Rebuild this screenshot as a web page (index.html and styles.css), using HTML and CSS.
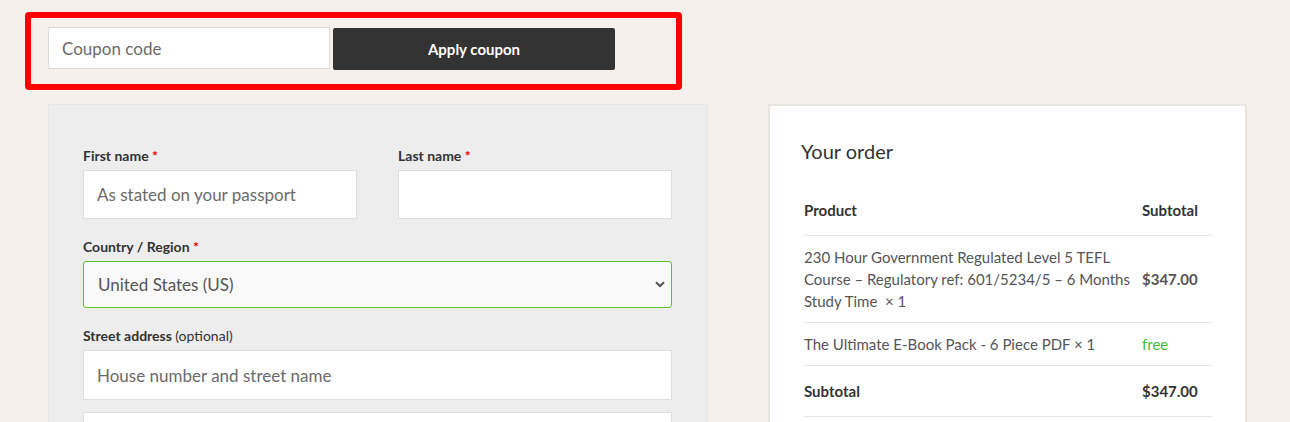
FILE: index.html
```html
<!DOCTYPE html>
<html lang="en">
<head>
<meta charset="utf-8">
<title>Checkout</title>
<link rel="stylesheet" href="styles.css">
</head>
<body>
<div class="page">
  <div class="coupon-box">
    <input class="coupon-input" type="text" placeholder="Coupon code">
    <button class="coupon-btn" type="button">Apply coupon</button>
  </div>
  <div class="columns">
    <form class="billing">
      <div class="row-2">
        <div class="field">
          <label class="lbl">First name <span class="req">*</span></label>
          <input class="txt" type="text" placeholder="As stated on your passport">
        </div>
        <div class="field">
          <label class="lbl">Last name <span class="req">*</span></label>
          <input class="txt" type="text">
        </div>
      </div>
      <div class="field">
        <label class="lbl">Country / Region <span class="req">*</span></label>
        <div class="select">
          <span>United States (US)</span>
          <svg class="chev" width="10" height="7" viewBox="0 0 10 7"><path d="M1 1.2 L5 5 L9 1.2" fill="none" stroke="#555" stroke-width="2"/></svg>
        </div>
      </div>
      <div class="field">
        <label class="lbl">Street address <span class="opt">(optional)</span></label>
        <input class="txt tall" type="text" placeholder="House number and street name">
        <input class="txt tall" type="text">
      </div>
    </form>
    <div class="order">
      <h3 class="order-title">Your order</h3>
      <table class="order-table">
        <thead>
          <tr><th>Product</th><th class="col-sub">Subtotal</th></tr>
        </thead>
        <tbody>
          <tr class="item">
            <td class="prod">230 Hour Government Regulated Level 5 TEFL Course – Regulatory ref: 601/5234/5 – 6 Months Study Time &nbsp;× 1</td>
            <td class="price">$347.00</td>
          </tr>
          <tr class="item">
            <td class="prod">The Ultimate E-Book Pack - 6 Piece PDF × 1</td>
            <td class="free">free</td>
          </tr>
        </tbody>
        <tfoot>
          <tr><th>Subtotal</th><td class="total">$347.00</td></tr>
        </tfoot>
      </table>
    </div>
  </div>
</div>
</body>
</html>
```

FILE: styles.css
```css
* { box-sizing: border-box; }
html, body { margin: 0; padding: 0; }
body {
  background: #f5f0eb;
  font-family: Lato, "Open Sans", sans-serif;
  color: #333;
  width: 1290px;
  height: 422px;
  overflow: hidden;
}
.page {
  padding: 12px 0 0 25px;
}
.coupon-box {
  width: 657px;
  height: 78px;
  border: 6px solid #ff0000;
  border-radius: 4px;
  display: flex;
  align-items: flex-start;
  padding: 9px 0 0 17px;
  gap: 3px;
}
.coupon-input {
  width: 282px;
  height: 42px;
  border: 1px solid #dcdcdc;
  background: #fff;
  padding: 0 13px;
  font-family: inherit;
  font-size: 17px;
  color: #666;
  outline: none;
}
.coupon-input::placeholder { color: #6b6b6b; }
.coupon-btn {
  margin-top: 1px;
  width: 282px;
  height: 42px;
  border: none;
  border-radius: 2px;
  background: #333;
  color: #fff;
  font-family: inherit;
  font-weight: 700;
  font-size: 15px;
}
.columns {
  display: flex;
  align-items: flex-start;
  gap: 60px;
  margin-top: 14px;
  padding-left: 23px;
}
.billing {
  width: 660px;
  height: 330px;
  background: #ededed;
  border: 1px solid #e6e6e6;
  padding: 41px 35px 0 34px;
  display: flex;
  flex-direction: column;
  gap: 18px;
}
.row-2 {
  display: flex;
  gap: 41px;
}
.row-2 .field { width: 274px; }
.field {
  display: flex;
  flex-direction: column;
}
.lbl {
  font-size: 14px;
  font-weight: 700;
  color: #333;
  line-height: 20px;
  margin-bottom: 4px;
}
.req { color: #e00; font-weight: 700; }
.opt { font-weight: 400; }
.txt {
  width: 100%;
  height: 49px;
  border: 1px solid #dedede;
  background: #fff;
  padding: 0 13px;
  font-family: inherit;
  font-size: 17px;
  color: #666;
  outline: none;
}
.txt.tall { height: 50px; }
.txt::placeholder { color: #6b6b6b; }
.field > .txt + .txt { margin-top: 12px; }
.select {
  height: 47px;
  border: 1px solid #62c12a;
  border-radius: 3px;
  background: #f9f9f9;
  display: flex;
  align-items: center;
  justify-content: space-between;
  padding: 0 6px 0 14px;
  font-size: 17px;
  color: #555;
}
.order {
  width: 479px;
  background: #fff;
  border: 2px solid #e9e6e2;
  padding: 31px 33px 0 34px;
  height: 330px;
}
.order-title {
  margin: 0 0 0 -3px;
  font-size: 20px;
  font-weight: 400;
  color: #333;
  line-height: 28px;
}
.order-table {
  width: 100%;
  border-collapse: collapse;
  margin-top: 22px;
  font-size: 15px;
  line-height: 22px;
}
.order-table th {
  text-align: left;
  font-weight: 700;
  color: #333;
  padding: 12px 0 14px;
}
.order-table td { padding: 10px 0 10px; vertical-align: middle; }
.order-table tr { border-bottom: 1px solid #e5e5e5; }
.order-table .col-sub, .order-table td.price, .order-table td.free, .order-table td.total { width: 70px; }
.prod { color: #555; padding-right: 12px !important; }
.price { color: #555; font-weight: 700; }
.free { color: #3cbe3c; }
.order-table tfoot th, .order-table tfoot td { padding: 14px 0 14px; }
.total { font-weight: 700; color: #333; }
```
